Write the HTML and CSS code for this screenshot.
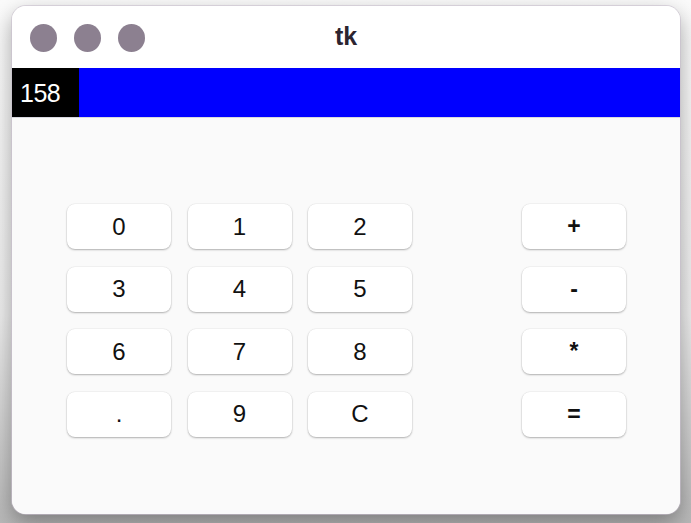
FILE: index.html
```html
<!DOCTYPE html>
<html>
<head>
<meta charset="utf-8">
<link rel="stylesheet" href="styles.css">
</head>
<body>
<div class="window">
  <div class="titlebar">
    <div class="lights">
      <span class="light"></span>
      <span class="light"></span>
      <span class="light"></span>
    </div>
    <div class="title">tk</div>
  </div>
  <div class="display">
    <div class="value">158</div>
  </div>
  <div class="content">
    <div class="digits">
      <button class="key">0</button>
      <button class="key">1</button>
      <button class="key">2</button>
      <button class="key">3</button>
      <button class="key">4</button>
      <button class="key">5</button>
      <button class="key">6</button>
      <button class="key">7</button>
      <button class="key">8</button>
      <button class="key">.</button>
      <button class="key">9</button>
      <button class="key">C</button>
    </div>
    <div class="ops">
      <button class="key op">+</button>
      <button class="key op">-</button>
      <button class="key op">*</button>
      <button class="key op">=</button>
    </div>
  </div>
</div>
</body>
</html>
```
FILE: styles.css
```css
html, body {
  margin: 0;
  padding: 0;
  height: 100%;
}
body {
  background: linear-gradient(#fbfbfb 0%, #eeeeee 60%, #b8b8b8 100%);
  font-family: "Liberation Sans", Arial, sans-serif;
  overflow: hidden;
}
.window {
  margin: 6px 11px 0 12px;
  height: 508px;
  background: #fafafa;
  border-radius: 14px;
  box-shadow: 0 0 0 1px rgba(200, 190, 205, 0.6), 0 8px 22px rgba(0, 0, 0, 0.35);
  overflow: hidden;
  display: flex;
  flex-direction: column;
}
.titlebar {
  height: 62px;
  background: #ffffff;
  position: relative;
  display: flex;
  align-items: center;
  justify-content: center;
}
.lights {
  position: absolute;
  left: 18px;
  top: 18px;
  display: flex;
  gap: 17px;
}
.light {
  width: 27px;
  height: 28px;
  border-radius: 50%;
  background: #8c8090;
}
.title {
  font-family: "Liberation Sans", Arial, sans-serif;
  font-weight: bold;
  font-size: 25px;
  color: #2c2430;
  margin-top: -2px;
}
.display {
  height: 49px;
  background: #0000ff;
  display: flex;
  border-bottom: 1px solid #d8d8e0;
}
.value {
  background: #000000;
  color: #ffffff;
  width: 67px;
  box-sizing: border-box;
  padding-left: 8px;
  padding-top: 11px;
  font-size: 25px;
  letter-spacing: -0.5px;
}
.content {
  flex: 1;
  display: flex;
  padding: 86px 0 0 55px;
  background: #fafafa;
}
.digits {
  display: grid;
  grid-template-columns: repeat(3, 104px);
  grid-auto-rows: 45px;
  column-gap: 16.5px;
  row-gap: 17.5px;
}
.ops {
  margin-left: 110px;
  display: grid;
  grid-template-columns: 104px;
  grid-auto-rows: 45px;
  row-gap: 17.5px;
}
.key {
  border: none;
  background: #ffffff;
  border-radius: 8px;
  box-shadow: 0 1px 2px rgba(0, 0, 0, 0.28), 0 0 0 0.5px rgba(0, 0, 0, 0.06);
  font-family: "Liberation Sans", Arial, sans-serif;
  font-size: 24px;
  color: #111111;
  padding: 0;
  margin: 0;
  display: flex;
  align-items: center;
  justify-content: center;
}
.op {
  font-weight: bold;
  font-size: 23px;
}
```
